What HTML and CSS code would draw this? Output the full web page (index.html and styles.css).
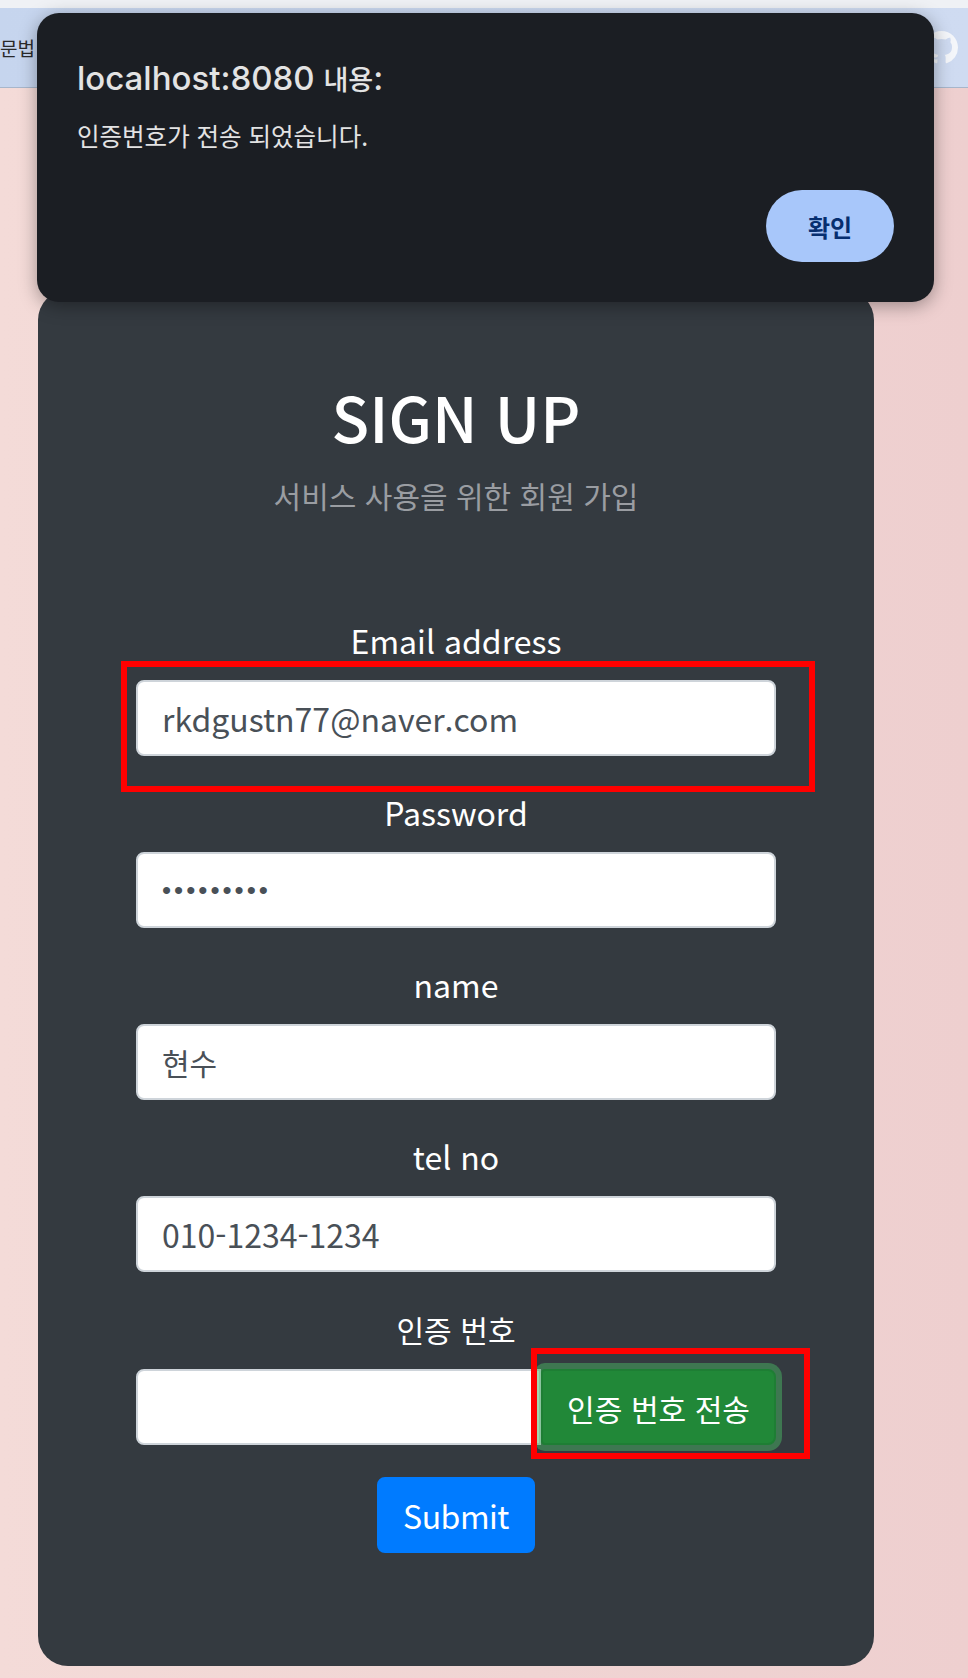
FILE: index.html
```html
<!DOCTYPE html>
<html lang="ko">
<head>
<meta charset="utf-8">
<title>Sign up</title>
<link rel="stylesheet" href="styles.css">
</head>
<body>
<div class="topstrip"></div>
<nav class="navbar">
  <span class="nav-text">문법</span>
  <svg class="gh" viewBox="0 0 16 16" aria-hidden="true"><path fill-rule="evenodd" d="M8 0C3.58 0 0 3.58 0 8c0 3.54 2.29 6.53 5.47 7.590.4.07.55-.17.55-.38 0-.19-.01-.82-.01-1.49-2.01.37-2.53-.49-2.69-.94-.09-.23-.48-.94-.82-1.13-.28-.15-.68-.52-.01-.53.63-.01 1.08.58 1.23.82.72 1.21 1.87.87 2.33.66.07-.52.28-.87.51-1.07-1.78-.2-3.64-.89-3.64-3.95 0-.87.31-1.59.82-2.15-.08-.2-.36-1.02.08-2.12 0 0 .67-.21 2.2.82.64-.18 1.32-.27 2-.27.68 0 1.36.09 2 .27 1.53-1.04 2.2-.82 2.2-.82.44 1.1.16 1.92.08 2.12.51.56.82 1.27.82 2.15 0 3.07-1.87 3.75-3.65 3.95.29.25.54.73.54 1.48 0 1.07-.01 1.93-.01 2.2 0 .21.15.46.55.38A8.013 8.013 0 0016 8c0-4.42-3.58-8-8-8z"/></svg>
</nav>

<main class="card">
  <h1 class="title">SIGN UP</h1>
  <p class="subtitle">서비스 사용을 위한 회원 가입</p>
  <form class="form">
    <div class="group">
      <label class="label">Email address</label>
      <input class="input" type="text" value="rkdgustn77@naver.com">
    </div>
    <div class="group">
      <label class="label">Password</label>
      <input class="input input-pw" type="password" value="123456789">
    </div>
    <div class="group">
      <label class="label">name</label>
      <input class="input input-ko" type="text" value="현수">
    </div>
    <div class="group">
      <label class="label">tel no</label>
      <input class="input" type="text" value="010-1234-1234">
    </div>
    <div class="group">
      <label class="label"><span class="ko">인증 번호</span></label>
      <div class="input-group">
        <input class="input input-left" type="text" value="">
        <button type="button" class="btn-send"><span class="ko">인증 번호 전송</span></button>
      </div>
    </div>
    <div class="submit-row">
      <button type="button" class="btn-submit">Submit</button>
    </div>
  </form>
</main>

<div class="mark mark-email"></div>
<div class="mark mark-send"></div>

<div class="dialog" role="dialog">
  <div class="dialog-title">localhost:8080 <span class="ko-title">내용</span>:</div>
  <div class="dialog-msg">인증번호가 전송 되었습니다.</div>
  <div class="dialog-actions">
    <button type="button" class="dialog-btn">확인</button>
  </div>
</div>
</body>
</html>
```

FILE: styles.css
```css
* { box-sizing: border-box; }

html {
  background: linear-gradient(90deg, #f4dbd8 0%, #f0d4d3 55%, #eecfcf 100%);
}

body {
  margin: 0;
  min-height: 1678px;
  position: relative;
  font-family: "Noto Sans CJK KR", sans-serif;
  overflow: hidden;
}

.ko { font-size: 0.94em; }

.topstrip {
  height: 8px;
  background: #eff1f5;
}

.navbar {
  height: 80px;
  background: linear-gradient(90deg, #c6d5ee, #cfdbf1);
  border-bottom: 1px solid #a7b6cb;
  display: flex;
  align-items: center;
  justify-content: space-between;
  padding: 0 10px 0 0;
}

.nav-text {
  font-size: 19px;
  color: #2a2a2a;
  margin-left: 0;
}

.gh {
  width: 33px;
  height: 33px;
  fill: #f4f6fa;
}

.card {
  margin: 202px 0 0 38px;
  width: 836px;
  background: #343a40;
  border-radius: 30px;
  padding: 84px 98px 113px;
  color: #fff;
  text-align: center;
}

.title {
  margin: 0;
  font-size: 62px;
  font-weight: 500;
  line-height: 84px;
}

.subtitle {
  margin: 16px 0 0;
  font-size: 30px;
  line-height: 42px;
  color: #9a9da2;
}

.form { margin-top: 100px; }

.group { margin-bottom: 32px; }

.label {
  display: block;
  font-size: 32px;
  line-height: 48px;
  margin-bottom: 16px;
}

.input {
  display: block;
  width: 100%;
  height: 76px;
  padding: 0 24px;
  border: 2px solid #ced4da;
  border-radius: 8px;
  background: #fff;
  font-family: inherit;
  font-size: 32px;
  color: #495057;
  outline: none;
}

.input-pw {
  font-family: "Liberation Sans", sans-serif;
  font-size: 26px;
  letter-spacing: 3px;
}

.input-ko { font-size: 30px; }

.input-group {
  display: flex;
}

.input-left {
  flex: 1;
  border-radius: 8px 0 0 8px;
}

.btn-send {
  flex: none;
  height: 76px;
  padding: 0 24px;
  border: 2px solid #1e7e34;
  border-radius: 4px 8px 8px 4px;
  background: #218838;
  color: #fff;
  font-family: inherit;
  font-size: 32px;
  box-shadow: 0 0 0 6px rgba(72, 180, 97, 0.5);
  position: relative;
}

.submit-row {
  display: flex;
  justify-content: center;
}

.btn-submit {
  height: 76px;
  padding: 0 24px;
  border: 2px solid #007bff;
  border-radius: 8px;
  background: #007bff;
  color: #fff;
  font-family: inherit;
  font-size: 32px;
  letter-spacing: -0.5px;
}

.mark {
  position: absolute;
  border: 6px solid #ff0000;
}

.mark-email { left: 121px; top: 661px; width: 694px; height: 131px; }
.mark-send { left: 531px; top: 1348px; width: 279px; height: 111px; }

.dialog {
  position: absolute;
  top: 13px;
  left: 37px;
  width: 897px;
  height: 289px;
  background: #1b1e23;
  border-radius: 22px;
  box-shadow: 0 4px 18px rgba(0, 0, 0, 0.35);
  padding: 47px 40px 40px;
  display: flex;
  flex-direction: column;
  font-family: Inter, "Noto Sans CJK KR", sans-serif;
}

.dialog-title {
  font-size: 33px;
  line-height: 36px;
  font-weight: 500;
  color: #e3e3e3;
}

.ko-title {
  font-family: "Noto Sans CJK KR", sans-serif;
  font-size: 0.82em;
}

.dialog-msg {
  margin-top: 24px;
  font-family: "Noto Sans CJK KR", sans-serif;
  font-size: 24.5px;
  line-height: 30px;
  color: #e3e3e3;
}

.dialog-actions {
  margin-top: auto;
  display: flex;
  justify-content: flex-end;
}

.dialog-btn {
  width: 128px;
  height: 72px;
  border: 0;
  border-radius: 36px;
  background: #a8c7fa;
  color: #062e6f;
  font-family: "Noto Sans CJK KR", sans-serif;
  font-size: 24px;
  font-weight: 700;
}
```
